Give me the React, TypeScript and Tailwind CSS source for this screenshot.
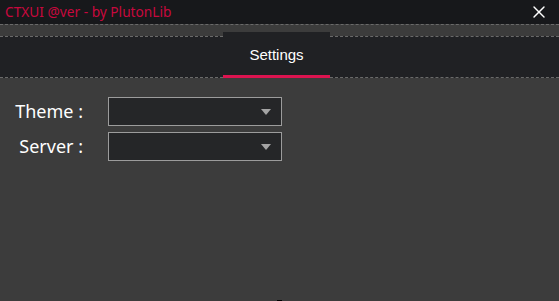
import { X } from "lucide-react";

const SelectBox = () => (
  <div className="relative w-[174px] h-[29px] border border-[#9c9c9c] bg-[#252628]">
    <span className="absolute right-[10px] top-[11px] w-0 h-0 border-l-[5px] border-r-[5px] border-t-[6px] border-l-transparent border-r-transparent border-t-[#a4a4a4]" />
  </div>
);

export default function App() {
  return (
    <div className="relative w-[559px] h-[301px] bg-[#3c3c3c] overflow-hidden font-['Noto_Sans',sans-serif]">
      {/* title bar */}
      <div className="h-[24px] bg-[#17181b] flex items-center justify-between pl-[5px] pr-[10px]">
        <span className="text-[13.7px] leading-none text-[#c8083e]">CTXUI @ver - by PlutonLib</span>
        <X className="w-[20px] h-[20px] text-white" strokeWidth={1.7} />
      </div>
      <div className="border-t border-dashed border-[#6a6a6a]" />
      <div className="h-[7px]" />

      {/* tab bar */}
      <div className="flex items-stretch h-[46px]">
        <div className="w-[223px] mt-[4px] bg-[#202124] border-t border-b border-dashed border-[#6a6a6a]" />
        <div className="w-[107px] bg-[#202124] flex flex-col">
          <div className="flex-1 flex items-center justify-center pt-[3px] text-[15px] text-white font-['Liberation_Sans',sans-serif]">
            Settings
          </div>
          <div className="h-[3px] bg-[#dc1450]" />
        </div>
        <div className="flex-1 mt-[4px] bg-[#202124] border-t border-b border-dashed border-[#6a6a6a]" />
      </div>

      {/* body */}
      <div className="pt-[19px] flex flex-col gap-[6px]">
        <div className="flex items-center">
          <span className="w-[84px] text-right pr-[1px] text-[18px] text-white">Theme :</span>
          <div className="ml-[24px]"><SelectBox /></div>
        </div>
        <div className="flex items-center">
          <span className="w-[84px] text-right pr-[1px] text-[18px] text-white">Server :</span>
          <div className="ml-[24px]"><SelectBox /></div>
        </div>
      </div>

      <div className="absolute left-[277px] bottom-0 w-[5px] h-[1px] bg-black" />
    </div>
  );
}
